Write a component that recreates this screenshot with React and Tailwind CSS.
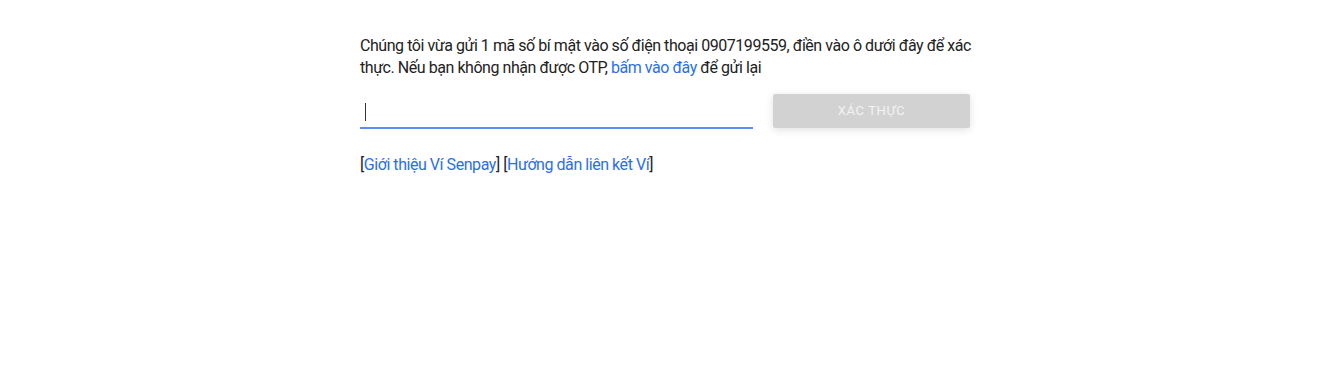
import React from "react";

const App = () => {
  return (
    <div
      className="min-h-screen bg-white"
      style={{ fontFamily: "Roboto, 'Noto Sans', sans-serif" }}
    >
      <div className="w-[614px] mx-auto pt-[35px]">
        <p className="text-[16px] leading-[22px] tracking-[-0.45px] text-[#222]">
          Chúng tôi vừa gửi 1 mã số bí mật vào số điện thoại 0907199559, điền vào ô dưới đây để xác
          thực. Nếu bạn không nhận được OTP,{" "}
          <a href="#" className="text-[#2a6ef0]">bấm vào đây</a> để gửi lại
        </p>

        <div className="flex items-start gap-5 mt-[15px]">
          <div className="w-[393px] h-[35px] border-b-2 border-[#5a8ef6] flex items-center pl-[5px] pt-[2px]">
            <div className="w-px h-[18px] bg-[#333]" />
          </div>
          <button
            type="button"
            className="w-[197px] h-[34px] bg-[#d2d2d2] text-[#f3f3f3] text-[13px] tracking-[0.05em] rounded-[2px] shadow-[0_2px_8px_rgba(0,0,0,0.12)]"
          >
            XÁC THỰC
          </button>
        </div>

        <div className="mt-[25px] text-[16px] leading-[22px] tracking-[-0.45px] text-[#222]">
          [<a href="#" className="text-[#2a6ef0]">Giới thiệu Ví Senpay</a>] [
          <a href="#" className="text-[#2a6ef0]">Hướng dẫn liên kết Ví</a>]
        </div>
      </div>
    </div>
  );
};

export default App;
